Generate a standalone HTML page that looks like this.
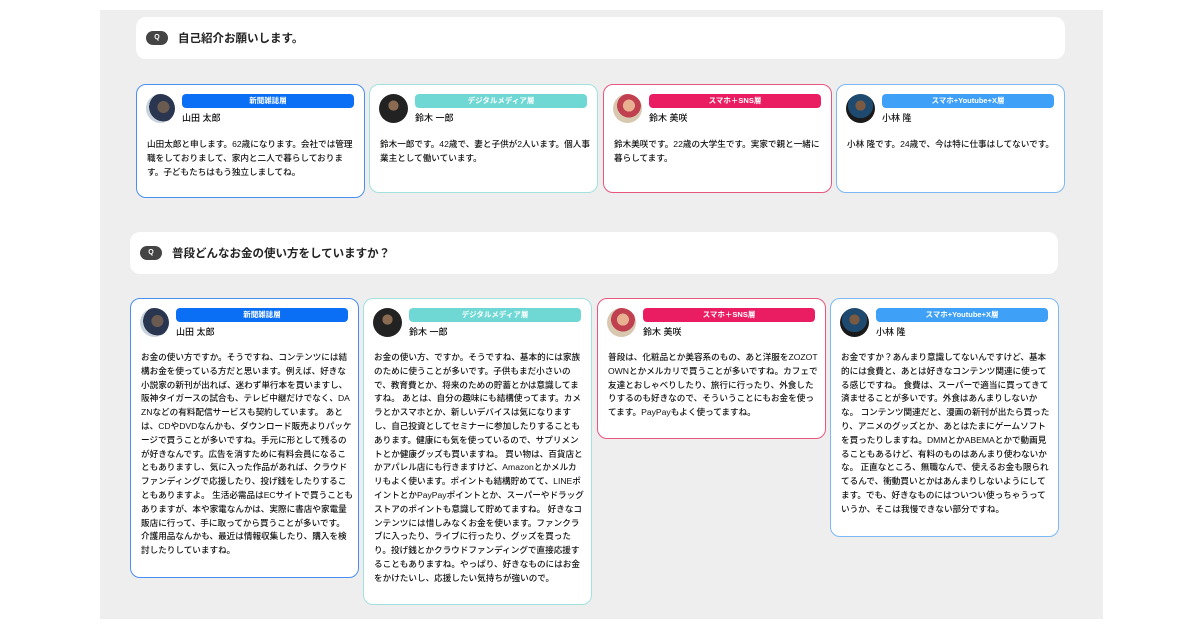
<!DOCTYPE html>
<html><head><meta charset="utf-8"><style>
*{margin:0;padding:0;box-sizing:border-box}
body{width:1200px;height:630px;background:#fff;position:relative;overflow:hidden;font-family:"Liberation Sans","Noto Sans CJK JP",sans-serif;color:#222}
.bg{position:absolute;left:100px;top:10px;width:1003px;height:609px;background:#eeeeee}
.q{position:absolute;background:#fff;border-radius:10px;height:42px;font-size:11.5px;font-weight:bold;display:flex;align-items:center}
.qi{display:inline-block;width:22px;height:14px;border-radius:7px;background:#444;color:#fff;font-size:7px;text-align:center;line-height:14px;margin-right:10px;margin-left:10px}
.c{position:absolute;background:#fff;border:1.5px solid;border-radius:10px;width:229px}
.av{position:absolute;left:9px;top:9px;width:29px;height:29px;border-radius:50%;overflow:hidden}
.bd{position:absolute;left:45px;top:9px;width:172px;height:14px;border-radius:4px;color:#fff;font-size:7.5px;font-weight:bold;text-align:center;line-height:14px}
.nm{position:absolute;left:45px;top:27px;font-size:9px;line-height:13px;color:#111;font-weight:500}
.tx{position:absolute;left:10px;top:52px;font-size:8.6px;line-height:13.8px;white-space:nowrap;color:#111;font-weight:500}
.b1{border-color:#4a8ff0}.b2{border-color:#a2e2de}.b3{border-color:#e8567f}.b4{border-color:#7cb9f4}
.g1{background:#0a6ff5}.g2{background:#6fd8d4}.g3{background:#ea1d63}.g4{background:#3fa0f7}
</style></head><body>
<div class="bg"></div>
<div class="q" style="left:136px;top:17px;width:929px"><span class="qi">Q</span>自己紹介お願いします。</div>
<div class="q" style="left:130px;top:232px;width:928px"><span class="qi">Q</span>普段どんなお金の使い方をしていますか？</div>

<div class="c b1" style="left:136px;top:84px;height:114px">
<div class="av" style="background:radial-gradient(circle at 60% 45%,#6a5a50 0 25%,#2a3550 26% 60%,#c8d2dc 61%)"></div>
<div class="bd g1">新聞雑誌層</div><div class="nm">山田 太郎</div>
<div class="tx" style="top:53px">山田太郎と申します。62歳になります。会社では管理<br>職をしておりまして、家内と二人で暮らしておりま<br>す。子どもたちはもう独立しましてね。</div></div>
<div class="c b2" style="left:369px;top:84px;height:109px">
<div class="av" style="background:radial-gradient(circle at 50% 40%,#8a6a50 0 22%,#222 23%)"></div>
<div class="bd g2">デジタルメディア層</div><div class="nm">鈴木 一郎</div>
<div class="tx" style="top:53px">鈴木一郎です。42歳で、妻と子供が2人います。個人事<br>業主として働いています。</div></div>
<div class="c b3" style="left:603px;top:84px;height:109px">
<div class="av" style="background:radial-gradient(circle at 55% 40%,#e8b090 0 25%,#c04050 26% 50%,#d8c8b0 51%)"></div>
<div class="bd g3">スマホ＋SNS層</div><div class="nm">鈴木 美咲</div>
<div class="tx" style="top:53px">鈴木美咲です。22歳の大学生です。実家で親と一緒に<br>暮らしてます。</div></div>
<div class="c b4" style="left:836px;top:84px;height:109px">
<div class="av" style="background:radial-gradient(circle at 50% 40%,#7a5a40 0 22%,#1e4a70 23% 55%,#1a1a1a 56%)"></div>
<div class="bd g4">スマホ+Youtube+X層</div><div class="nm">小林 隆</div>
<div class="tx" style="top:53px">小林 隆です。24歳で、今は特に仕事はしてないです。</div></div>

<div class="c b1" style="left:130px;top:298px;height:280px">
<div class="av" style="background:radial-gradient(circle at 60% 45%,#6a5a50 0 25%,#2a3550 26% 60%,#c8d2dc 61%)"></div>
<div class="bd g1">新聞雑誌層</div><div class="nm">山田 太郎</div>
<div class="tx">お金の使い方ですか。そうですね、コンテンツには結<br>構お金を使っている方だと思います。例えば、好きな<br>小説家の新刊が出れば、迷わず単行本を買いますし、<br>阪神タイガースの試合も、テレビ中継だけでなく、DA<br>ZNなどの有料配信サービスも契約しています。 あと<br>は、CDやDVDなんかも、ダウンロード販売よりパッケ<br>ージで買うことが多いですね。手元に形として残るの<br>が好きなんです。広告を消すために有料会員になるこ<br>ともありますし、気に入った作品があれば、クラウド<br>ファンディングで応援したり、投げ銭をしたりするこ<br>ともありますよ。 生活必需品はECサイトで買うことも<br>ありますが、本や家電なんかは、実際に書店や家電量<br>販店に行って、手に取ってから買うことが多いです。<br>介護用品なんかも、最近は情報収集したり、購入を検<br>討したりしていますね。</div></div>
<div class="c b2" style="left:363px;top:298px;height:307px">
<div class="av" style="background:radial-gradient(circle at 50% 40%,#8a6a50 0 22%,#222 23%)"></div>
<div class="bd g2">デジタルメディア層</div><div class="nm">鈴木 一郎</div>
<div class="tx">お金の使い方、ですか。そうですね、基本的には家族<br>のために使うことが多いです。子供もまだ小さいの<br>で、教育費とか、将来のための貯蓄とかは意識してま<br>すね。 あとは、自分の趣味にも結構使ってます。カメ<br>ラとかスマホとか、新しいデバイスは気になります<br>し、自己投資としてセミナーに参加したりすることも<br>あります。健康にも気を使っているので、サプリメン<br>トとか健康グッズも買いますね。 買い物は、百貨店と<br>かアパレル店にも行きますけど、Amazonとかメルカ<br>リもよく使います。ポイントも結構貯めてて、LINEポ<br>イントとかPayPayポイントとか、スーパーやドラッグ<br>ストアのポイントも意識して貯めてますね。 好きなコ<br>ンテンツには惜しみなくお金を使います。ファンクラ<br>ブに入ったり、ライブに行ったり、グッズを買った<br>り。投げ銭とかクラウドファンディングで直接応援す<br>ることもありますね。やっぱり、好きなものにはお金<br>をかけたいし、応援したい気持ちが強いので。</div></div>
<div class="c b3" style="left:597px;top:298px;height:141px">
<div class="av" style="background:radial-gradient(circle at 55% 40%,#e8b090 0 25%,#c04050 26% 50%,#d8c8b0 51%)"></div>
<div class="bd g3">スマホ＋SNS層</div><div class="nm">鈴木 美咲</div>
<div class="tx">普段は、化粧品とか美容系のもの、あと洋服をZOZOT<br>OWNとかメルカリで買うことが多いですね。カフェで<br>友達とおしゃべりしたり、旅行に行ったり、外食した<br>りするのも好きなので、そういうことにもお金を使っ<br>てます。PayPayもよく使ってますね。</div></div>
<div class="c b4" style="left:830px;top:298px;height:239px">
<div class="av" style="background:radial-gradient(circle at 50% 40%,#7a5a40 0 22%,#1e4a70 23% 55%,#1a1a1a 56%)"></div>
<div class="bd g4">スマホ+Youtube+X層</div><div class="nm">小林 隆</div>
<div class="tx">お金ですか？あんまり意識してないんですけど、基本<br>的には食費と、あとは好きなコンテンツ関連に使って<br>る感じですね。 食費は、スーパーで適当に買ってきて<br>済ませることが多いです。外食はあんまりしないか<br>な。 コンテンツ関連だと、漫画の新刊が出たら買った<br>り、アニメのグッズとか、あとはたまにゲームソフト<br>を買ったりしますね。DMMとかABEMAとかで動画見<br>ることもあるけど、有料のものはあんまり使わないか<br>な。 正直なところ、無職なんで、使えるお金も限られ<br>てるんで、衝動買いとかはあんまりしないようにして<br>ます。でも、好きなものにはついつい使っちゃうって<br>いうか、そこは我慢できない部分ですね。</div></div>
</body></html>
